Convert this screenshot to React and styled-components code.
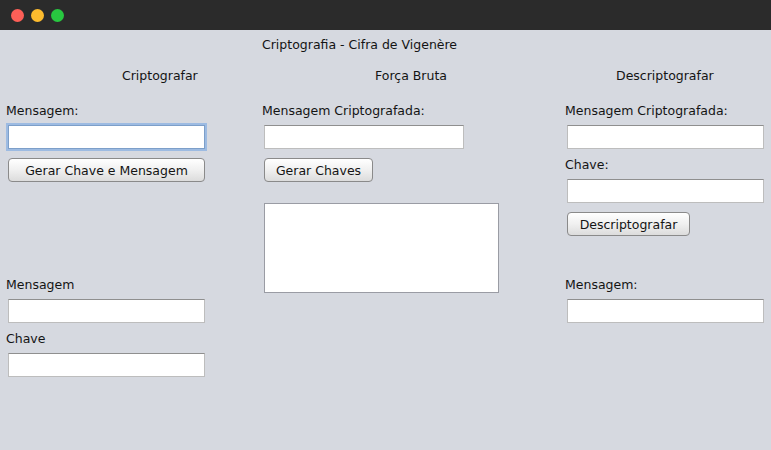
import styled, { createGlobalStyle } from "styled-components";

const Global = createGlobalStyle`
  html, body {
    margin: 0;
    background: #d6d9e0;
  }
  body {
    font-family: "DejaVu Sans", "Liberation Sans", sans-serif;
    font-size: 12.5px;
    color: #141414;
  }
`;

const Window = styled.div`
  width: 771px;
  height: 450px;
  display: flex;
  flex-direction: column;
  background: #d6d9e0;
  overflow: hidden;
`;

const TitleBar = styled.div`
  height: 30px;
  flex: none;
  background: #2b2b2b;
  display: flex;
  align-items: center;
  gap: 7px;
  padding-left: 11px;
`;

const Dot = styled.span`
  width: 13px;
  height: 13px;
  border-radius: 50%;
  background: ${(p) => p.$color};
`;

const Heading = styled.div`
  margin-top: 7px;
  padding-left: 262px;
  line-height: 15px;
`;

const Columns = styled.div`
  display: grid;
  grid-template-columns: 256px 303px 1fr;
  padding-left: 6px;
  margin-top: 16px;
`;

const Column = styled.div`
  display: flex;
  flex-direction: column;
  align-items: flex-start;
`;

const ColumnTitle = styled.div`
  padding-left: ${(p) => p.$indent}px;
  line-height: 15px;
`;

const Label = styled.div`
  margin-top: ${(p) => p.$gap}px;
  line-height: 15px;
`;

const Field = styled.div`
  margin-top: ${(p) => p.$gap || 7}px;
  margin-left: 2px;
  width: ${(p) => p.$width}px;
  height: 24px;
  box-sizing: border-box;
  background: #fff;
  border: 1px solid #bdbdbd;
  border-top-color: #8f8f8f;
  ${(p) =>
    p.$focused &&
    `
    border: 1px solid #7d9fc9;
    box-shadow: 0 0 0 2px #9dbbe2;
  `}
`;

const Button = styled.div`
  margin-top: ${(p) => p.$gap}px;
  margin-left: 2px;
  width: ${(p) => p.$width}px;
  height: 24px;
  box-sizing: border-box;
  border: 1px solid #8a8a8a;
  border-radius: 4px;
  background: linear-gradient(#ffffff, #f0f0f0 50%, #dcdcdc);
  display: flex;
  align-items: center;
  justify-content: center;
  color: #141414;
`;

const TextArea = styled.div`
  margin-top: 21px;
  margin-left: 2px;
  width: 235px;
  height: 90px;
  box-sizing: border-box;
  background: #fff;
  border: 1px solid #9a9ca4;
`;

export default function App() {
  return (
    <>
      <Global />
      <Window>
        <TitleBar>
          <Dot $color="#fe5f57" />
          <Dot $color="#febc2e" />
          <Dot $color="#28c840" />
        </TitleBar>
        <Heading>Criptografia - Cifra de Vigenère</Heading>
        <Columns>
          <Column>
            <ColumnTitle $indent={116}>Criptografar</ColumnTitle>
            <Label $gap={20}>Mensagem:</Label>
            <Field $width={197} $focused />
            <Button $gap={9} $width={197}>Gerar Chave e Mensagem</Button>
            <Label $gap={95}>Mensagem</Label>
            <Field $width={197} />
            <Label $gap={8}>Chave</Label>
            <Field $width={197} />
          </Column>
          <Column>
            <ColumnTitle $indent={113}>Força Bruta</ColumnTitle>
            <Label $gap={20}>Mensagem Criptografada:</Label>
            <Field $width={200} />
            <Button $gap={9} $width={109}>Gerar Chaves</Button>
            <TextArea />
          </Column>
          <Column>
            <ColumnTitle $indent={51}>Descriptografar</ColumnTitle>
            <Label $gap={20}>Mensagem Criptografada:</Label>
            <Field $width={197} />
            <Label $gap={8}>Chave:</Label>
            <Field $width={197} />
            <Button $gap={9} $width={123}>Descriptografar</Button>
            <Label $gap={41}>Mensagem:</Label>
            <Field $width={197} />
          </Column>
        </Columns>
      </Window>
    </>
  );
}
